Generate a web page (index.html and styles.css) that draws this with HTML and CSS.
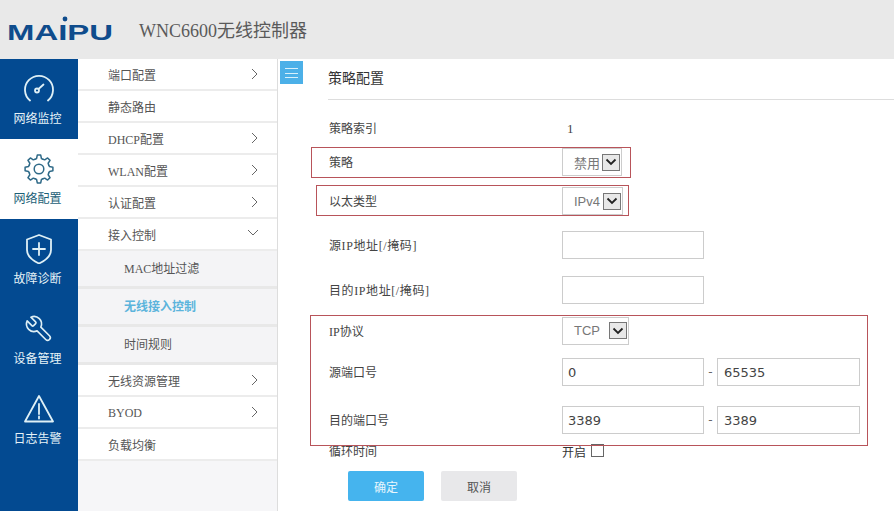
FILE: index.html
```html
<!DOCTYPE html>
<html lang="zh">
<head>
<meta charset="utf-8">
<title>WNC6600无线控制器</title>
<link rel="stylesheet" href="styles.css">
</head>
<body>
<div class="page">
  <header class="top">
    <svg class="logo" width="112" height="34" viewBox="0 0 112 34" aria-label="MAIPU">
      <text x="0" y="26" textLength="106" lengthAdjust="spacingAndGlyphs" class="logo-text">MAIPU</text>
      <circle cx="58" cy="5" r="2.400" fill="#0f4c8c"/>
    </svg>
    <div class="product">WNC6600无线控制器</div>
  </header>
  <div class="body">
    <nav class="side">
      <a class="side-item">
        <svg class="side-icon" viewBox="0 0 30 30"><path d="M6 26.500A14 14 0 1 1 24 26.500"/><circle cx="13" cy="16.500" r="2"/><path d="M14.500 15L19.500 10.500"/></svg>
        <span>网络监控</span>
      </a>
      <a class="side-item on">
        <svg class="side-icon" viewBox="0 0 30 30">
          <path id="tooth" d="M10.980 5.300L12.570 4.480L13.290 1.100H16.710L17.430 4.480L19.020 5.300"/>
          <use href="#tooth" transform="rotate(45 15 15)"/><use href="#tooth" transform="rotate(90 15 15)"/><use href="#tooth" transform="rotate(135 15 15)"/><use href="#tooth" transform="rotate(180 15 15)"/><use href="#tooth" transform="rotate(225 15 15)"/><use href="#tooth" transform="rotate(270 15 15)"/><use href="#tooth" transform="rotate(315 15 15)"/>
          <circle cx="15" cy="15" r="4.800"/>
        </svg>
        <span>网络配置</span>
      </a>
      <a class="side-item">
        <svg class="side-icon" viewBox="0 0 30 30"><path d="M15 1L27 5.500V16C27 22 21.500 26.500 15 29.500C8.500 26.500 3 22 3 16V5.500Z"/><path d="M15 9V21M9 15H21"/></svg>
        <span>故障诊断</span>
      </a>
      <a class="side-item">
        <svg class="side-icon thin" viewBox="0 0 24 24"><path transform="translate(24 0) scale(-1 1)" d="M14.700 6.300a1 1 0 0 0 0 1.400l1.600 1.600a1 1 0 0 0 1.400 0l3.770-3.770a6 6 0 0 1-7.940 7.940l-6.910 6.910a2.120 2.120 0 0 1-3-3l6.910-6.910a6 6 0 0 1 7.940-7.940l-3.760 3.760z"/></svg>
        <span>设备管理</span>
      </a>
      <a class="side-item">
        <svg class="side-icon" viewBox="0 0 30 30"><path d="M15 2L29 27.500H1Z"/><path d="M15 10V20M15 22.500V24.500"/></svg>
        <span>日志告警</span>
      </a>
    </nav>
    <aside class="menu">
      <div class="mi">端口配置<svg class="chev" viewBox="0 0 7 12"><path d="M1 1L6 6L1 11"/></svg></div>
      <div class="mi">静态路由</div>
      <div class="mi">DHCP配置<svg class="chev" viewBox="0 0 7 12"><path d="M1 1L6 6L1 11"/></svg></div>
      <div class="mi">WLAN配置<svg class="chev" viewBox="0 0 7 12"><path d="M1 1L6 6L1 11"/></svg></div>
      <div class="mi">认证配置<svg class="chev" viewBox="0 0 7 12"><path d="M1 1L6 6L1 11"/></svg></div>
      <div class="mi">接入控制<svg class="chev-d" viewBox="0 0 12 7"><path d="M1 1L6 6L11 1"/></svg></div>
      <div class="sub">MAC地址过滤</div>
      <div class="sub active">无线接入控制</div>
      <div class="sub">时间规则</div>
      <div class="mi">无线资源管理<svg class="chev" viewBox="0 0 7 12"><path d="M1 1L6 6L1 11"/></svg></div>
      <div class="mi">BYOD<svg class="chev" viewBox="0 0 7 12"><path d="M1 1L6 6L1 11"/></svg></div>
      <div class="mi">负载均衡</div>
    </aside>
    <main class="content">
      <button class="toggle" aria-label="menu"><i></i><i></i><i></i></button>
      <div class="panel">
        <h1 class="title">策略配置</h1>
        <form class="form">
          <label class="lab">策略索引</label><div class="val"><span class="index">1</span></div>
          <label class="lab">策略</label><div class="val"><div class="sel w60">禁用<b class="arrow"><svg viewBox="0 0 12 8"><path d="M1.500 1.500L6 6L10.500 1.500"/></svg></b></div></div>
          <label class="lab">以太类型</label><div class="val"><div class="sel w61">IPv4<b class="arrow"><svg viewBox="0 0 12 8"><path d="M1.500 1.500L6 6L10.500 1.500"/></svg></b></div></div>
          <label class="lab wide">源IP地址[/掩码]</label><div class="val"><div class="inp"></div></div>
          <label class="lab wide">目的IP地址[/掩码]</label><div class="val"><div class="inp"></div></div>
          <label class="lab">IP协议</label><div class="val"><div class="sel w67">TCP<b class="arrow"><svg viewBox="0 0 12 8"><path d="M1.500 1.500L6 6L10.500 1.500"/></svg></b></div></div>
          <label class="lab">源端口号</label><div class="val"><div class="inp">0</div><span class="dash">-</span><div class="inp second">65535</div></div>
          <label class="lab">目的端口号</label><div class="val"><div class="inp">3389</div><span class="dash">-</span><div class="inp second">3389</div></div>
          <label class="lab">循环时间</label><div class="val"><span class="open">开启</span><span class="check"></span></div>
        </form>
        <div class="actions">
          <div class="btn ok">确定</div>
          <div class="btn no">取消</div>
        </div>
      </div>
    </main>
  </div>
  <div class="mark m1"></div>
  <div class="mark m2"></div>
  <div class="mark m3"></div>
</div>
</body>
</html>
```
FILE: styles.css
```css
* { box-sizing: border-box; }
html, body { margin: 0; padding: 0; }
body { background: #fff; font-family: "Liberation Serif", "Noto Sans CJK SC", serif; font-size: 12px; color: #444; overflow: hidden; }
.page { position: relative; width: 894px; height: 511px; display: flex; flex-direction: column; overflow: hidden; }

.top { height: 59px; flex: none; background: #e9e9e9; display: flex; align-items: flex-start; }
.logo { margin: 14px 0 0 7px; flex: none; }
.logo-text { font-family: "Liberation Sans", sans-serif; font-weight: 700; font-size: 22px; fill: #0f4c8c; }
.product { margin: 21px 0 0 20px; font-size: 18px; line-height: 20px; color: #5a5a5a; }

.body { flex: 1; display: flex; min-height: 0; }

.side { width: 78px; flex: none; background: #034a91; display: flex; flex-direction: column; }
.side-item { height: 80px; flex: none; padding-top: 15px; display: flex; flex-direction: column; align-items: center; color: #e6f3f8; font-family: "Noto Sans CJK SC", sans-serif; }
.side-item span { margin: 6px 3px 0 0; line-height: 16px; }
.side-icon { width: 30px; height: 30px; fill: none; stroke: #dff0f6; stroke-width: 1.800; stroke-linejoin: round; stroke-linecap: round; }
.side-icon.thin { stroke-width: 1.300; }
.side-item.on { background: #fff; color: #1d5f77; }
.side-item.on .side-icon { stroke: #2f6a88; stroke-width: 1.500; }

.menu { width: 200px; flex: none; background: #f6f6f8; border-right: 1px solid #ddd; }
.mi { position: relative; height: 32px; padding: 2px 0 0 30px; background: #fff; border-bottom: 2px solid #ececec; display: flex; align-items: center; color: #555; }
.sub { height: 38px; padding: 0 0 2px 46px; background: #f4f4f6; border-bottom: 3px solid #e8e8e8; display: flex; align-items: center; color: #555; }
.sub.active { color: #5cb4dc; font-weight: 700; }
.chev { position: absolute; right: 19px; top: 9px; width: 7px; height: 12px; fill: none; stroke: #666; stroke-width: 1; }
.chev-d { position: absolute; right: 18px; top: 10px; width: 12px; height: 7px; fill: none; stroke: #666; stroke-width: 1; }

.content { flex: 1; display: flex; min-width: 0; background: #fff; }
.toggle { flex: none; width: 23px; height: 23px; margin: 2px 0 0 2px; padding: 7px 5px 6px; border: 0; background: #4cb0e8; display: flex; flex-direction: column; justify-content: space-between; }
.toggle i { display: block; height: 1px; background: #d8f0fb; }
.panel { flex: 1; min-width: 0; margin-left: 25px; }
.title { margin: 0; height: 41px; padding-top: 8px; font: 400 14px/20px "Noto Sans CJK SC", sans-serif; color: #333; border-bottom: 1px solid #ddd; }

.form { margin-top: 12px; padding-left: 1px; display: grid; grid-template-columns: 233px 1fr; grid-template-rows: 32px 36px 42px 46px 44px 37px 46px 49px 14px; align-items: center; }
.lab { color: #444; white-space: nowrap; }
.lab.wide { letter-spacing: .6px; }
.val { display: flex; align-items: center; min-height: 0; }
.index { margin: 1px 0 0 5px; font-size: 13px; }
.sel { height: 28px; padding: 0 1px 0 11px; border: 1px solid #ccc; background: #fff; display: flex; align-items: center; justify-content: space-between; font-family: "Liberation Sans", "Noto Sans CJK SC", sans-serif; font-size: 13px; color: #777; }
.w60 { width: 60px; }
.w61 { width: 61px; }
.w67 { width: 67px; }
.arrow { width: 18px; height: 17px; border: 1px solid #777; background: #e8e8e8; display: flex; align-items: center; justify-content: center; }
.arrow svg { width: 12px; height: 8px; fill: none; stroke: #222; stroke-width: 1.800; }
.inp { width: 142px; height: 28px; padding-left: 5px; border: 1px solid #ccc; background: #fff; line-height: 27px; font-family: "DejaVu Sans", sans-serif; font-size: 13px; color: #444; }
.inp.second { width: 143px; padding-left: 6px; }
.dash { width: 13px; text-align: center; font-family: "DejaVu Sans", sans-serif; color: #666; }
.open { color: #333; line-height: 14px; margin-top: 4px; }
.check { width: 13px; height: 13px; margin: -1px 0 0 5px; border: 1px solid #666; background: #fff; }

.actions { margin: 13px 0 0 20px; display: flex; gap: 17px; }
.btn { width: 76px; height: 30px; border-radius: 2px; display: flex; align-items: center; justify-content: center; font-family: "Noto Sans CJK SC", sans-serif; }
.ok { background: #45b4ee; color: #e8f6fd; }
.no { background: #e8e8ea; color: #555; }

.mark { position: absolute; border: 1px solid #b8545a; pointer-events: none; }
.m1 { left: 311px; top: 147px; width: 320px; height: 31px; }
.m2 { left: 316px; top: 185px; width: 313px; height: 31px; }
.m3 { left: 310px; top: 315px; width: 558px; height: 131px; }
```
